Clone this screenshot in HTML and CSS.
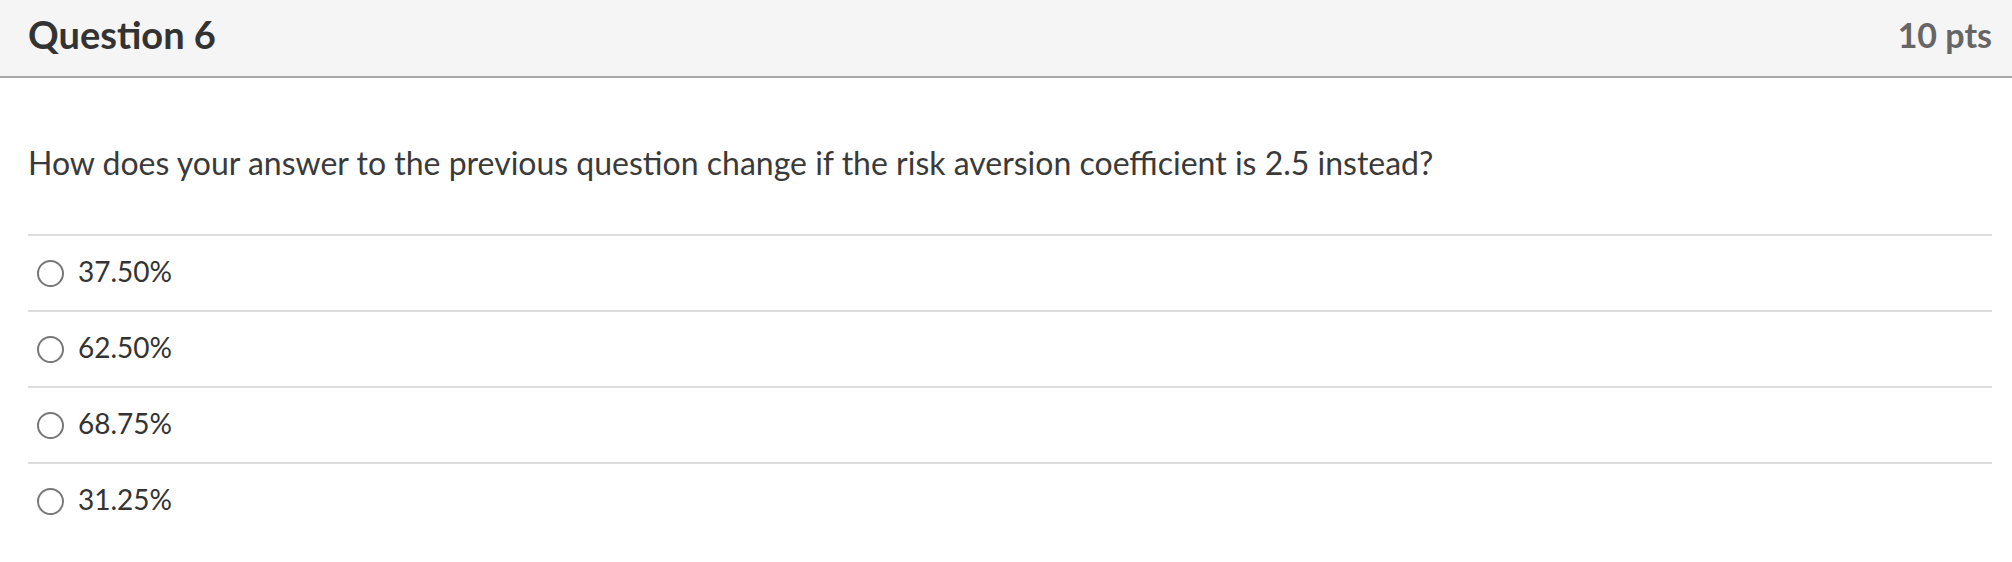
FILE: index.html
```html
<!DOCTYPE html>
<html>
<head>
<meta charset="utf-8">
<link rel="stylesheet" href="styles.css">
</head>
<body>
<div class="question">
  <div class="header">
    <h2 class="title">Question 6</h2>
    <div class="pts">10 pts</div>
  </div>
  <div class="content">
    <p class="text">How does your answer to the previous question change if the risk aversion coefficient is 2.5 instead?</p>
    <div class="answers">
      <label class="answer"><span class="radio"></span><span class="label">37.50%</span></label>
      <label class="answer"><span class="radio"></span><span class="label">62.50%</span></label>
      <label class="answer"><span class="radio"></span><span class="label">68.75%</span></label>
      <label class="answer"><span class="radio"></span><span class="label">31.25%</span></label>
    </div>
  </div>
</div>
</body>
</html>
```
FILE: styles.css
```css
html, body {
  margin: 0;
  padding: 0;
  background: #fff;
  font-family: Lato, "Open Sans", sans-serif;
  color: #333;
}
.header {
  height: 78px;
  box-sizing: border-box;
  background: #f5f5f5;
  border-bottom: 2px solid #a8a8a8;
  display: flex;
  align-items: center;
  justify-content: space-between;
  padding: 0 20px 8px 28px;
}
.title {
  margin: 0;
  font-size: 38px;
  font-weight: 700;
  color: #333;
}
.pts {
  font-size: 34px;
  font-weight: 700;
  color: #666;
}
.content {
  padding: 0 20px 0 28px;
}
.text {
  margin: 0;
  height: 156px;
  box-sizing: border-box;
  padding-top: 65px;
  font-size: 32px;
  line-height: 40px;
  color: #3a3a3a;
}
.answers {
  display: flex;
  flex-direction: column;
}
.answer {
  display: flex;
  align-items: center;
  height: 74px;
  border-top: 2px solid #ddd;
  padding-left: 9px;
  gap: 14px;
  font-size: 28px;
}
.radio {
  width: 23px;
  height: 23px;
  border: 2px solid #777;
  border-radius: 50%;
  flex: none;
  margin-top: 1px;
}
.label {
  margin-bottom: 5px;
}
```
